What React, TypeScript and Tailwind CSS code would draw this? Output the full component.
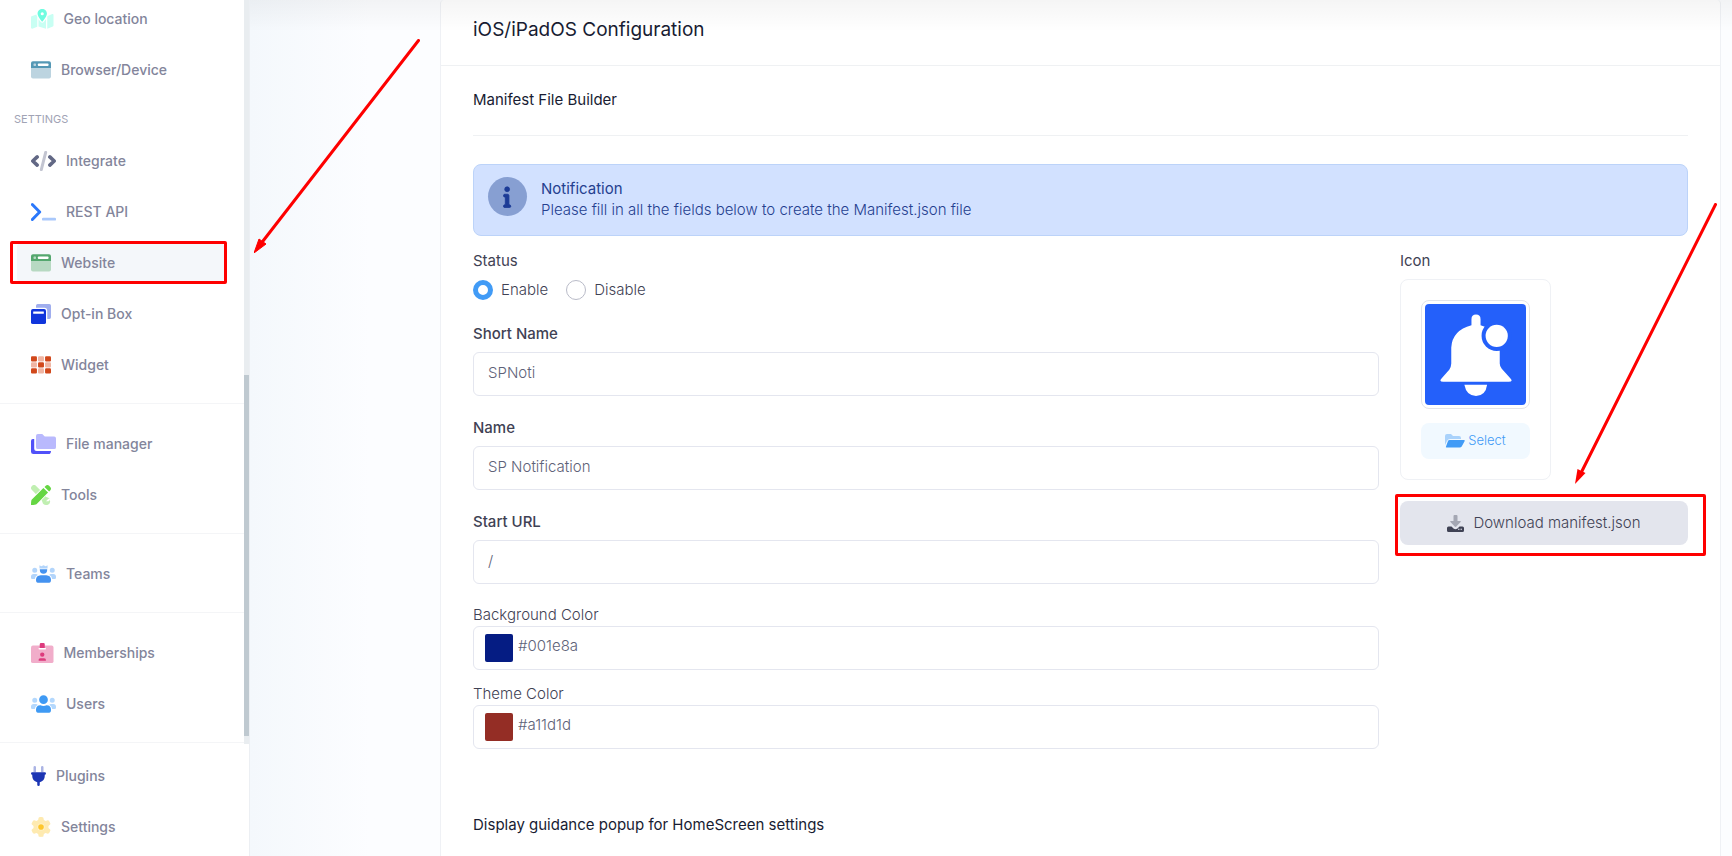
import React, { useState } from "react";

interface MenuItem {
  label: string;
  icon: React.ReactNode;
}

const Icon = ({ w = 512, className = "", children }: { w?: number; className?: string; children: React.ReactNode }) => (
  <svg viewBox={`0 0 ${w} 512`} className={`h-5 shrink-0 ${className}`} aria-hidden="true">
    {children}
  </svg>
);

const GeoIcon = () => (
  <Icon w={576}>
    <path fill="#c8fff3" d="M416 503l144.9-58c9.1-3.6 15.1-12.5 15.1-22.3V152c0-17-17.1-28.6-32.9-22.3l-116 46.4c-.5 1.2-1 2.5-1.5 3.7c-2.9 6.8-6.1 13.7-9.6 20.6V503zM15.1 187.3C6 191 0 199.8 0 209.6V480.4c0 17 17.1 28.6 32.9 22.3L160 451.8V200.4c-3.5-6.9-6.7-13.8-9.6-20.6c-5.6-13.2-10.4-27.4-12.8-41.5l-122.6 49zM384 255c-20.5 31.3-42.3 59.6-56.2 77.1c-20.5 25.6-59.1 25.6-79.6 0c-13.9-17.4-35.7-45.7-56.2-77.1V449.4l192 54.9V255z" />
    <path fill="#6ffce0" fillRule="evenodd" d="M408 120c0 54.6-73.1 151.9-105.2 192c-7.7 9.6-22 9.6-29.6 0C241.1 271.9 168 174.6 168 120C168 53.7 221.7 0 288 0s120 53.7 120 120zM288 160a40 40 0 1 0 0-80a40 40 0 1 0 0 80z" />
  </Icon>
);

const BrowserIcon = ({ dark, light }: { dark: string; light: string }) => (
  <Icon>
    <path fill={light} d="M0 205H512V425q0 50-50 50H50q-50 0-50-50z" />
    <path fill={dark} d="M50 32H462q50 0 50 50V205H0V82q0-50 50-50z" />
    <rect fill={light} x="64" y="88" width="64" height="64" rx="16" />
    <rect fill="#fff" x="176" y="88" width="272" height="64" rx="20" />
  </Icon>
);

const CodeIcon = () => (
  <Icon w={640}>
    <path d="M376 34L264 478" stroke="#c3c5d1" strokeWidth="76" strokeLinecap="round" fill="none" />
    <path d="M158 152L46 256L158 360M482 152L594 256L482 360" stroke="#626885" strokeWidth="92" strokeLinecap="round" strokeLinejoin="round" fill="none" />
  </Icon>
);

const TerminalIcon = () => (
  <Icon w={640}>
    <rect x="282" y="400" width="358" height="76" rx="30" fill="#a9c8fb" />
    <path d="M34 66L222 256L34 446" stroke="#2b78fb" strokeWidth="76" strokeLinecap="round" strokeLinejoin="round" fill="none" />
  </Icon>
);

const OptInIcon = () => (
  <Icon>
    <path fill="#a0aeee" d="M170 0H470q42 0 42 42V342q0 42-42 42H416V170q0-74-74-74H128V42q0-42 42-42z" />
    <rect fill="#1035dc" y="128" width="384" height="384" rx="48" />
    <rect fill="#fff" x="56" y="192" width="272" height="58" rx="8" />
  </Icon>
);

const WidgetIcon = () => (
  <Icon>
    {[0, 1, 2, 3, 4, 5, 6, 7, 8].map((i) => (
      <rect key={i} x={(i % 3) * 180} y={32 + Math.floor(i / 3) * 154} width="152" height="136" rx="28" fill={i % 2 ? "#f0b5a3" : "#d1481b"} />
    ))}
  </Icon>
);

const FilesIcon = () => (
  <Icon w={640}>
    <path fill="#5151f9" d="M0 176q0-48 48-48h34V368q0 64 64 64H512q0 80-64 80H60q-60 0-60-60z" />
    <path fill="#b9b9fd" d="M176 0h112l64 64h240q48 0 48 48v224q0 48-48 48H176q-48 0-48-48V48q0-48 48-48z" />
  </Icon>
);

const ToolsIcon = () => (
  <Icon>
    <path d="M78 78L200 200M330 350l64 72" stroke="#c0efb1" strokeWidth="150" strokeLinecap="round" fill="none" />
    <circle cx="390" cy="414" r="98" fill="#c0efb1" />
    <path fill="#fff" d="M384 416l60-66h68v10l-60 58z" />
    <path fill="#fff" d="M-6 518V360L370 0H512V142L150 518z" />
    <path fill="#65d643" d="M22 372L318 76l118 118L140 490Q120 510 0 512Q0 390 22 372zM346 48l32-32q42-34 86 4l28 28q38 44 4 86l-32 32z" />
  </Icon>
);

const SideUsers = ({ color }: { color: string }) => (
  <path fill={color} d="M96 224a64 64 0 1 0 0-128a64 64 0 1 0 0 128zM544 224a64 64 0 1 0 0-128a64 64 0 1 0 0 128zM64 256c-36 0-64 28-64 64v32q0 32 32 32h66c6-50 32-84 76-104c-12-15-27-24-46-24zM576 256c36 0 64 28 64 64v32q0 32-32 32h-66c-6-50-32-84-76-104c12-15 27-24 46-24z" />
);

const TeamsIcon = () => (
  <Icon w={640}>
    <SideUsers color="#b3d5fb" />
    <path fill="#b3d5fb" d="M216 32l48 24l56-24l56 24l48-24v80H216z" />
    <path fill="#4492f0" d="M226 136H414v18a94 94 0 0 1-188 0zM248 288h144q120 12 120 116q0 76-46 76H174q-46 0-46-76q0-104 120-116z" />
  </Icon>
);

const UsersIcon = () => (
  <Icon w={640}>
    <SideUsers color="#b4d8fd" />
    <path fill="#3f9af4" d="M320 256a112 112 0 1 0 0-224a112 112 0 1 0 0 224zM237 288h7c46 22 106 22 152 0h7q109 6 109 115q0 77-48 77H176q-48 0-48-77q0-109 109-115z" />
  </Icon>
);

const BadgeIcon = () => (
  <Icon w={576}>
    <path fill="#f1adca" d="M48 64H528q48 0 48 48V464q0 48-48 48H48q-48 0-48-48V112q0-48 48-48z" />
    <rect fill="#fff" x="192" y="128" width="192" height="38" rx="16" />
    <path fill="#dd3a7d" d="M256 0h64q32 0 32 32v96H224V32q0-32 32-32zM288 352a56 56 0 1 0 0-112a56 56 0 1 0 0 112zM240 392h96q48 0 48 48q0 12-12 12H204q-12 0-12-12q0-48 48-48z" />
  </Icon>
);

const PlugIcon = () => (
  <Icon w={384}>
    <path fill="#abb4e4" d="M64 32q0-32 32-32t32 32v128H64zM256 32q0-32 32-32t32 32v128h-64z" />
    <path fill="#1c35b4" d="M32 160H352q32 0 32 32t-32 32v32q0 128-128 157v66q0 33-32 33t-32-33v-66Q32 384 32 256v-32q-32 0-32-32t32-32z" />
  </Icon>
);

const GearIcon = () => (
  <Icon>
    <path fill="#feeab0" d="M495.9 166.6c3.2 8.7 .5 18.4-6.4 24.6l-43.3 39.4c1.1 8.3 1.7 16.8 1.7 25.4s-.6 17.1-1.7 25.4l43.3 39.4c6.9 6.2 9.6 15.9 6.4 24.6c-4.4 11.9-9.7 23.3-15.8 34.3l-4.7 8.1c-6.6 11-14 21.4-22.1 31.2c-5.9 7.2-15.7 9.6-24.5 6.8l-55.7-17.7c-13.4 10.3-28.2 18.9-44 25.4l-12.5 57.1c-2 9.1-9 16.3-18.2 17.8c-13.8 2.3-28 3.5-42.5 3.5s-28.7-1.2-42.5-3.5c-9.2-1.5-16.2-8.7-18.2-17.8l-12.5-57.1c-15.8-6.5-30.6-15.1-44-25.4L83.1 425.9c-8.8 2.8-18.6 .3-24.5-6.8c-8.1-9.8-15.5-20.2-22.1-31.2l-4.7-8.1c-6.1-11-11.4-22.4-15.8-34.3c-3.2-8.7-.5-18.4 6.4-24.6l43.3-39.4C64.6 273.1 64 264.6 64 256s.6-17.1 1.7-25.4L22.4 191.2c-6.9-6.2-9.6-15.9-6.4-24.6c4.4-11.9 9.7-23.3 15.8-34.3l4.7-8.1c6.6-11 14-21.4 22.1-31.2c5.9-7.2 15.7-9.6 24.5-6.8l55.7 17.7c13.4-10.3 28.2-18.9 44-25.4l12.5-57.1c2-9.1 9-16.3 18.2-17.8C227.3 1.2 241.5 0 256 0s28.7 1.2 42.5 3.5c9.2 1.5 16.2 8.7 18.2 17.8l12.5 57.1c15.8 6.5 30.6 15.1 44 25.4l55.7-17.7c8.8-2.8 18.6-.3 24.5 6.8c8.1 9.8 15.5 20.2 22.1 31.2l4.7 8.1c6.1 11 11.4 22.4 15.8 34.3z" />
    <circle cx="256" cy="256" r="90" fill="#fff3cf" />
    <circle cx="256" cy="256" r="72" fill="#fdc62c" />
  </Icon>
);

const BellLogo = () => (
  <svg viewBox="0 0 100 100" className="block w-full rounded" role="img" aria-label="App icon">
    <rect width="100" height="100" fill="#2460fa" />
    <path fill="#fff" d="M46 21V15q0-4.500 4.500-4.500T55 15v6q12 3 19 14v24q0 3 2 5l8 9q4 4-1 4H18q-5 0-1-4l7-8q2-3 2-6V43Q27 26 46 21z" />
    <circle cx="71" cy="31.500" r="15" fill="#2460fa" />
    <circle cx="71" cy="31.500" r="11" fill="#fff" />
    <path fill="#fff" d="M39 80H61.500Q60 91 50.500 91T39 80z" />
  </svg>
);

const mainMenu: MenuItem[] = [
  { label: "Geo location", icon: <GeoIcon /> },
  { label: "Browser/Device", icon: <BrowserIcon dark="#5498b5" light="#bcd4e0" /> },
];

const settingsMenu: MenuItem[] = [
  { label: "Integrate", icon: <CodeIcon /> },
  { label: "REST API", icon: <TerminalIcon /> },
  { label: "Website", icon: <BrowserIcon dark="#54a76e" light="#b7d9c2" /> },
  { label: "Opt-in Box", icon: <OptInIcon /> },
  { label: "Widget", icon: <WidgetIcon /> },
];

const fileMenu: MenuItem[] = [
  { label: "File manager", icon: <FilesIcon /> },
  { label: "Tools", icon: <ToolsIcon /> },
];

const teamMenu: MenuItem[] = [{ label: "Teams", icon: <TeamsIcon /> }];

const userMenu: MenuItem[] = [
  { label: "Memberships", icon: <BadgeIcon /> },
  { label: "Users", icon: <UsersIcon /> },
];

const footerMenu: MenuItem[] = [
  { label: "Plugins", icon: <PlugIcon /> },
  { label: "Settings", icon: <GearIcon /> },
];

const Menu = ({ items, active }: { items: MenuItem[]; active?: string }) => (
  <ul className="flex flex-col gap-3 pl-[17px] pr-5">
    {items.map((item) => (
      <li key={item.label} className="relative">
        <a
          href="#"
          className={`flex h-[39px] items-center gap-[10px] rounded pl-[14px] text-sm font-medium text-[#83859b] ${
            item.label === active ? "bg-[#f4f7fa]" : ""
          }`}
        >
          {item.icon}
          {item.label}
        </a>
        {item.label === active && (
          <span className="pointer-events-none absolute -inset-y-0.5 -left-[7px] -right-[3px] rounded-[2px] border-[3px] border-[#fe0000]" />
        )}
      </li>
    ))}
  </ul>
);

const Divider = () => <hr className="mb-5 mt-[19px] border-[#f4f5f7]" />;

const TextField = ({ id, label, value }: { id: string; label: string; value: string }) => (
  <div className="flex flex-col gap-2">
    <label htmlFor={id} className="text-[15px] font-medium leading-5 text-[#3f4254]">{label}</label>
    <input
      id={id}
      type="text"
      defaultValue={value}
      className="h-11 w-full rounded-md border border-[#e4e6ef] px-[14px] pb-1 text-[15px] font-light text-[#5e6278] outline-none"
    />
  </div>
);

const ColorField = ({ id, label, value, swatch }: { id: string; label: string; value: string; swatch: string }) => (
  <div className="flex flex-col">
    <label htmlFor={id} className="text-[15px] font-light leading-[22px] text-[#3f4254]">{label}</label>
    <div className="flex h-11 items-center gap-[5px] rounded-md border border-[#e4e6ef] pl-[11px]">
      <input
        type="color"
        aria-label={`${label} picker`}
        defaultValue={swatch}
        className="size-7 shrink-0 appearance-none overflow-hidden rounded-[2px] p-0 [&::-webkit-color-swatch-wrapper]:p-0 [&::-webkit-color-swatch]:border-0"
      />
      <input
        id={id}
        type="text"
        defaultValue={value}
        className="min-w-0 flex-1 pb-1 text-[15px] font-light text-[#5e6278] outline-none"
      />
    </div>
  </div>
);

export default function App() {
  const [status, setStatus] = useState("Enable");

  return (
    <div className="relative flex min-h-screen overflow-hidden bg-[#fcfdff] font-['Inter','Open_Sans',sans-serif]">
      {/* Sidebar */}
      <aside className="flex h-screen w-[250px] shrink-0 flex-col border-r border-[#eceff3] bg-white">
        <div className="flex min-h-0 flex-1">
          <nav className="-mt-px min-w-0 flex-1 overflow-hidden">
            <Menu items={mainMenu} />
            <h2 className="pb-[13px] pl-[14px] pt-[21px] text-[11px] leading-[18px] text-[#a1a3b5]">SETTINGS</h2>
            <Menu items={settingsMenu} active="Website" />
            <Divider />
            <Menu items={fileMenu} />
            <Divider />
            <Menu items={teamMenu} />
            <Divider />
            <Menu items={userMenu} />
            <hr className="mt-[19px] border-[#f4f5f7]" />
          </nav>
          <div className="flex w-[5px] flex-col justify-end bg-[#e9edf0] pb-2">
            <div className="h-[49%] bg-[#bfc9d0]" />
          </div>
        </div>
        <div className="pb-[10px] pt-3">
          <Menu items={footerMenu} />
        </div>
      </aside>

      {/* Content */}
      <main className="min-w-0 flex-1 bg-linear-to-r from-[#f4f8fc] to-[#fcfdff] to-[120px] pl-[190px] pr-[11px]">
        <section className="h-full rounded-t border-x border-[#eff1f5] bg-white">
          <header className="border-b border-[#eff1f3] px-8 pb-[22px] pt-4">
            <h1 className="text-[19px] leading-[27px] text-[#181c32]">iOS/iPadOS Configuration</h1>
          </header>

          <div className="px-8 pt-6">
            <h2 className="border-b border-[#eff1f3] pb-[25px] text-[15px] leading-5 text-[#181c32]">
              Manifest File Builder
            </h2>

            <div className="mt-7 flex h-[72px] gap-[14px] rounded-lg border border-[#bcd3f9] bg-[#d2e1ff] px-[14px] pt-3">
              <div className="flex size-[39px] shrink-0 items-center justify-center rounded-full bg-[#879fd2]">
                <svg viewBox="0 0 192 512" className="h-[22px]" aria-hidden="true">
                  <path stroke="#1c3b96" strokeWidth="20" fill="#1c3b96" d="M40 76a56 56 0 1 1 112 0A56 56 0 1 1 40 76zM10 224c0-17.700 14.300-32 32-32H106c17.700 0 32 14.300 32 32V438h12c17.700 0 32 14.300 32 32s-14.300 32-32 32H42c-17.700 0-32-14.300-32-32s14.300-32 32-32H54V256H42c-17.700 0-32-14.300-32-32z" />
                </svg>
              </div>
              <div className="pt-px text-[15px] leading-[21px] text-[#25408f]">
                <p>Notification</p>
                <p className="font-light">Please fill in all the fields below to create the Manifest.json file</p>
              </div>
            </div>

            <div className="mt-[14px] grid grid-cols-4 gap-[21px]">
              <div className="col-span-3">
                <fieldset>
                  <legend className="text-[15px] leading-[21px] text-[#3f4254]">Status</legend>
                  <div className="mt-[9px] flex gap-[18px]">
                    {["Enable", "Disable"].map((option) => (
                      <label key={option} className="flex h-5 items-center gap-2 text-[15px] font-light leading-5 text-[#3f4254]">
                        <input
                          type="radio"
                          name="status"
                          checked={status === option}
                          onChange={() => setStatus(option)}
                          className="size-5 appearance-none rounded-full border border-[#b9bbc8] checked:border-[5px] checked:border-[#419bf6]"
                        />
                        {option}
                      </label>
                    ))}
                  </div>
                </fieldset>

                <div className="mt-6 flex flex-col gap-[22px]">
                  <TextField id="short-name" label="Short Name" value="SPNoti" />
                  <TextField id="name" label="Name" value="SP Notification" />
                  <TextField id="start-url" label="Start URL" value="/" />
                </div>
                <div className="mt-5 flex flex-col gap-[13px]">
                  <ColorField id="background-color" label="Background Color" value="#001e8a" swatch="#051c83" />
                  <ColorField id="theme-color" label="Theme Color" value="#a11d1d" swatch="#942d25" />
                </div>
              </div>

              <div className="flex flex-col">
                <h3 className="text-[15px] leading-[21px] text-[#3f4254]">Icon</h3>
                <div className="mt-2 flex w-[151px] flex-col gap-[14px] rounded-lg border border-[#eff1f5] p-5">
                  <div className="rounded-lg border border-[#e2e4ea] p-[3px]">
                    <BellLogo />
                  </div>
                  <button type="button" className="flex h-9 items-center justify-center gap-[3px] rounded-lg bg-[#f1f9ff] text-[13px] font-light text-[#419bf6]">
                    <svg viewBox="0 0 20 14" className="h-[14px]" aria-hidden="true">
                      <path fill="#a9d2fb" d="M0 11V2q0-2 2-2h4l2 2h6q2 0 2 2v1H5Q3 5 2 7z" />
                      <path fill="#419bf6" d="M4.500 6H19q1 0 .7 1l-3 5.500q-.7 1-2 1H1.500q-1 0-.5-1l2-5.500q.5-1 1.500-1z" />
                    </svg>
                    Select
                  </button>
                </div>
                <div className="relative mt-[21px]">
                  <button type="button" className="flex h-11 w-full items-center justify-center gap-[9px] rounded-lg bg-[#e3e5ed] text-[15px] font-light text-[#3f4254]">
                    <svg viewBox="0 0 17 17" className="h-[17px]" aria-hidden="true">
                      <path fill="#a4a7b3" d="M6.500 1q0-1 1-1h2q1 0 1 1v5H13q1.500 0 .6 1l-4.300 4.600q-.8.7-1.600 0L3.400 7Q2.500 6 4 6h2.500z" />
                      <path fill="#3f4254" d="M0 13q0-1.500 1.500-1.500h3L6.500 13.500q2 1.500 4 0l2-2h3Q17 11.500 17 13v2.500Q17 17 15.500 17h-14Q0 17 0 15.500z" />
                      <path fill="#e3e5ed" d="M11 13.700h1.500v1H11zM13.500 13.700H15v1h-1.500z" />
                    </svg>
                    Download manifest.json
                  </button>
                  <span className="pointer-events-none absolute -bottom-[11px] -left-[5px] -right-[18px] -top-[7px] rounded-[2px] border-[3px] border-[#fe0000]" />
                </div>
              </div>
            </div>

            <h2 className="mt-[65px] text-[15px] leading-[21px] text-[#181c32]">
              Display guidance popup for HomeScreen settings
            </h2>
          </div>
        </section>
      </main>

      {/* Shade under the fixed top bar */}
      <div className="pointer-events-none absolute left-[250px] right-0 top-0 h-8 bg-linear-to-b from-black/4 to-transparent" />

      {/* Callout arrows */}
      <svg viewBox="0 0 166 214" className="pointer-events-none absolute left-[254px] top-[39px] w-[166px]" aria-hidden="true">
        <path d="M164.500 1.500L9 202" stroke="#fe0000" strokeWidth="3" strokeLinecap="round" />
        <path fill="#fe0000" d="M0 214L5 200l7 5z" stroke="#fe0000" strokeWidth="1" />
      </svg>
      <svg viewBox="0 0 142 282" className="pointer-events-none absolute right-[15px] top-[203px] w-[142px]" aria-hidden="true">
        <path d="M140.500 1.500L7 268" stroke="#fe0000" strokeWidth="3" strokeLinecap="round" />
        <path fill="#fe0000" d="M0 281L2.500 266l8 4z" />
      </svg>
    </div>
  );
}
